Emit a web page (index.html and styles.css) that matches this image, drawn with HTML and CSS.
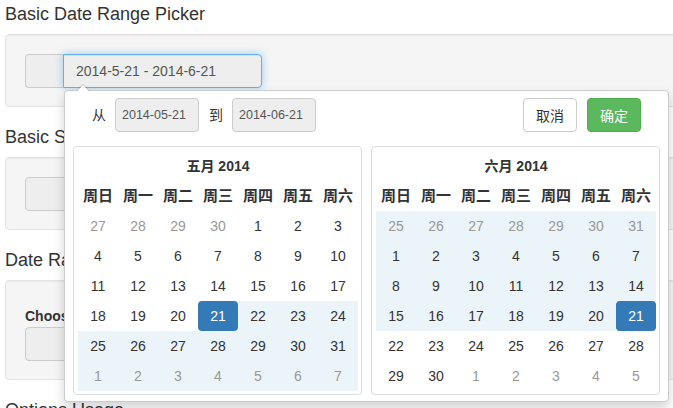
FILE: index.html
```html
<!DOCTYPE html>
<html lang="zh-CN">
<head>
  <meta charset="UTF-8" />
  <title>Date Range Picker</title>
  <link rel="stylesheet" href="styles.css">
</head>
<body>
  <div class="page">
    <h3 class="first">Basic Date Range Picker</h3>
    <div class="well">
      <div class="input-group">
        <span class="addon"></span>
        <input class="field focus" type="text" readonly value="2014-5-21 - 2014-6-21">
      </div>
    </div>

    <h3>Basic Single Date Picker</h3>
    <div class="well">
      <input class="field wide" type="text" readonly>
    </div>

    <h3>Date Range Picker With Times</h3>
    <div class="well">
      <label class="label">Choose your date range</label>
      <input class="field wide" type="text" readonly>
    </div>

    <h3>Options Usage</h3>
  </div>

  <!-- 日期范围弹出层 -->
  <div class="picker">
    <div class="picker-top">
      <div class="range">
        <span class="word">从</span>
        <input class="date-in" type="text" readonly value="2014-05-21">
        <span class="word">到</span>
        <input class="date-in" type="text" readonly value="2014-06-21">
      </div>
      <div class="actions">
        <button class="btn" type="button">取消</button>
        <button class="btn btn-ok" type="button">确定</button>
      </div>
    </div>

    <div class="calendars">
      <div class="cal">
        <div class="cal-title">五月 2014</div>
        <div class="dow">周日</div><div class="dow">周一</div><div class="dow">周二</div><div class="dow">周三</div><div class="dow">周四</div><div class="dow">周五</div><div class="dow">周六</div>
        <div class="off">27</div><div class="off">28</div><div class="off">29</div><div class="off">30</div><div>1</div><div>2</div><div>3</div>
        <div>4</div><div>5</div><div>6</div><div>7</div><div>8</div><div>9</div><div>10</div>
        <div>11</div><div>12</div><div>13</div><div>14</div><div>15</div><div>16</div><div>17</div>
        <div>18</div><div>19</div><div>20</div><div class="active">21</div><div class="in">22</div><div class="in">23</div><div class="in">24</div>
        <div class="in">25</div><div class="in">26</div><div class="in">27</div><div class="in">28</div><div class="in">29</div><div class="in">30</div><div class="in">31</div>
        <div class="off in">1</div><div class="off in">2</div><div class="off in">3</div><div class="off in">4</div><div class="off in">5</div><div class="off in">6</div><div class="off in">7</div>
      </div>

      <div class="cal">
        <div class="cal-title">六月 2014</div>
        <div class="dow">周日</div><div class="dow">周一</div><div class="dow">周二</div><div class="dow">周三</div><div class="dow">周四</div><div class="dow">周五</div><div class="dow">周六</div>
        <div class="off in">25</div><div class="off in">26</div><div class="off in">27</div><div class="off in">28</div><div class="off in">29</div><div class="off in">30</div><div class="off in">31</div>
        <div class="in">1</div><div class="in">2</div><div class="in">3</div><div class="in">4</div><div class="in">5</div><div class="in">6</div><div class="in">7</div>
        <div class="in">8</div><div class="in">9</div><div class="in">10</div><div class="in">11</div><div class="in">12</div><div class="in">13</div><div class="in">14</div>
        <div class="in">15</div><div class="in">16</div><div class="in">17</div><div class="in">18</div><div class="in">19</div><div class="in">20</div><div class="active">21</div>
        <div>22</div><div>23</div><div>24</div><div>25</div><div>26</div><div>27</div><div>28</div>
        <div>29</div><div>30</div><div class="off">1</div><div class="off">2</div><div class="off">3</div><div class="off">4</div><div class="off">5</div>
      </div>
    </div>
  </div>
</body>
</html>
```

FILE: styles.css
```css
html, body {margin:0; padding:0; overflow:hidden;}
body {font-family:"Liberation Sans", "Noto Sans CJK SC", sans-serif; font-size:14px; color:#333; background:#fff;}

.page {width:760px; padding:0 5px;}
h3 {margin:20px 0 10px; font-size:18px; line-height:20px; font-weight:normal; color:#333;}
h3.first {margin-top:4px;}

/* 背景パネル */
.well {
  background:#f5f5f5; border:1px solid #e3e3e3; border-radius:4px;
  padding:19px 19px 18px; box-shadow:inset 0 1px 1px rgba(0,0,0,.05);
}
.input-group {display:flex;}
.addon {width:37px; height:32px; background:#eee; border:1px solid #ccc; border-right:0; border-radius:4px 0 0 4px;}
.field {
  box-sizing:border-box; height:34px; padding:6px 12px; font:14px "Liberation Sans", sans-serif; color:#555;
  background:#eee; border:1px solid #ccc; border-radius:4px; outline:none; margin:0;
}
.field.focus {width:199px; border-radius:0 4px 4px 0; border-color:#66afe9;
  box-shadow:inset 0 1px 1px rgba(0,0,0,.075), 0 0 8px rgba(102,175,233,.6);}
.field.wide {display:block; width:400px;}
.label {display:block; margin:6px 0 1px; font-weight:bold; line-height:20px;}

/* ポップアップ */
.picker {
  position:absolute; left:64px; top:90px; width:587px; padding:7px 8px 6px;
  background:#fff; border:1px solid #ccc; border-radius:4px;
  box-shadow:0 6px 12px rgba(0,0,0,.175);
}
.picker:before, .picker:after {content:""; position:absolute; border-style:solid; border-color:transparent;}
.picker:before {left:11px; top:-7px; border-width:0 7px 7px; border-bottom-color:rgba(0,0,0,.2);}
.picker:after {left:12px; top:-6px; border-width:0 6px 6px; border-bottom-color:#fff;}

.picker-top {display:flex; justify-content:space-between; align-items:center; padding:0 19px; margin-bottom:14px;}
.range {display:flex; align-items:center;}
.word {width:14px; margin-right:9px; line-height:20px;}
.date-in {
  box-sizing:border-box; width:84px; height:34px; padding:0 6px; margin-right:10px;
  font:12.5px "Liberation Sans", sans-serif; color:#555; background:#eee;
  border:1px solid #ccc; border-radius:4px; outline:none;
}
.actions {display:flex; gap:10px;}
.btn {
  box-sizing:border-box; width:54px; height:34px; padding:0; font:14px "Liberation Sans", "Noto Sans CJK SC", sans-serif;
  color:#333; background:#fff; border:1px solid #ccc; border-radius:4px;
}
.btn-ok {color:#fff; background:#5cb85c; border-color:#4cae4c;}

/* カレンダー */
.calendars {display:flex; gap:9px;}
.cal {
  width:279px; padding:4px 4px 3px; border:1px solid #ddd; border-radius:4px;
  display:grid; grid-template-columns:repeat(7, 40px); grid-auto-rows:30px;
  text-align:center; line-height:30px;
}
.cal-title {grid-column:1 / 8; font-weight:bold;}
.dow {font-weight:bold; font-size:15px;}
.cal .off {color:#999;}
.cal .in {background:#ebf4f8;}
.cal .active {background:#337ab7; color:#fff; border-radius:4px;}
```
